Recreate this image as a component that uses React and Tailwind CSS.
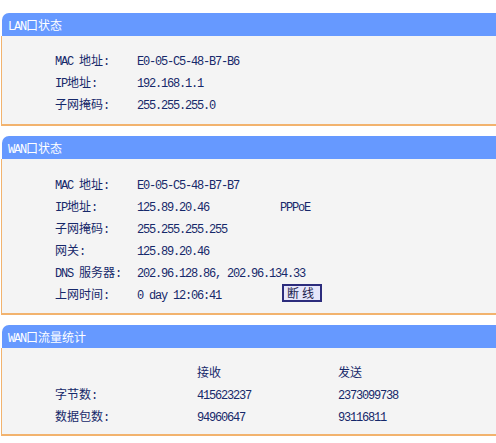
import React from 'react';

const CJK = /([\u3000-\u9fff\uff00-\uffef]+)/;

// SimSun-like mix: full-width CJK at 12px, half-width latin at 6px
function T({ s }) {
  return s.split(CJK).filter(Boolean).map((part, i) =>
    CJK.test(part) ? (
      <span key={i} className="font-['Noto_Sans_CJK_SC',sans-serif] text-[12px]">{part}</span>
    ) : (
      <span key={i} className="font-['Liberation_Mono','Noto_Sans_CJK_SC',monospace] text-[12px] tracking-[-1.2px] whitespace-pre">{part}</span>
    )
  );
}

function Section({ title, children, className = '' }) {
  return (
    <div className={`ml-[1px] w-[520px] ${className}`}>
      <div className="h-[23px] leading-[23px] bg-[#6699ff] rounded-tl-[7px] ml-[1px] pl-[6px] text-white">
        <T s={title} />
      </div>
      <div className="border-l border-b-2 border-[#f2b36e] bg-[#f4f4f4] text-[#16286a]">{children}</div>
    </div>
  );
}

function Row({ label, value, extra }) {
  return (
    <div className="flex h-[22px] items-center">
      <div className="w-[135px] pl-[53px] shrink-0">
        <T s={label} />
      </div>
      <div className="w-[143px] shrink-0">
        <T s={value} />
      </div>
      {extra}
    </div>
  );
}

const LAN = [
  ['MAC 地址:', 'E0-05-C5-48-B7-B6'],
  ['IP地址:', '192.168.1.1'],
  ['子网掩码:', '255.255.255.0'],
];

const WAN = [
  ['MAC 地址:', 'E0-05-C5-48-B7-B7'],
  ['IP地址:', '125.89.20.46', 'PPPoE'],
  ['子网掩码:', '255.255.255.255'],
  ['网关:', '125.89.20.46'],
  ['DNS 服务器:', '202.96.128.86, 202.96.134.33'],
];

const STATS = [
  ['字节数:', '415623237', '2373099738'],
  ['数据包数:', '94960647', '93116811'],
];

export default function App() {
  return (
    <div className="w-[496px] h-[443px] overflow-hidden bg-white pt-[13px]">
      <Section title="LAN口状态">
        <div className="pt-[12px] pb-[10px]">
          {LAN.map(([l, v]) => (
            <Row key={l} label={l} value={v} />
          ))}
        </div>
      </Section>

      <Section title="WAN口状态" className="mt-[10px]">
        <div className="pt-[13px] pb-[9px]">
          {WAN.map(([l, v, x]) => (
            <Row
              key={l}
              label={l}
              value={v}
              extra={x && <div className="whitespace-nowrap"><T s={x} /></div>}
            />
          ))}
          <Row
            label="上网时间:"
            value="0 day 12:06:41"
            extra={
              <button className="ml-[2px] w-[40px] h-[18px] border-2 border-[#2c2c7c] bg-[#e6e6fa] flex items-center justify-center tracking-[3px] text-[#1a1a4a] leading-none">
                <T s="断线" />
              </button>
            }
          />
        </div>
      </Section>

      <Section title="WAN口流量统计" className="mt-[10px]">
        <div className="pt-[12px] pb-[8px]">
          <div className="flex h-[22px] items-center">
            <div className="w-[195px] shrink-0" />
            <div className="w-[141px] shrink-0"><T s="接收" /></div>
            <div><T s="发送" /></div>
          </div>
          {STATS.map(([l, a, b]) => (
            <div key={l} className="flex h-[22px] items-center">
              <div className="w-[195px] pl-[53px] shrink-0"><T s={l} /></div>
              <div className="w-[141px] shrink-0"><T s={a} /></div>
              <div><T s={b} /></div>
            </div>
          ))}
        </div>
      </Section>
    </div>
  );
}
